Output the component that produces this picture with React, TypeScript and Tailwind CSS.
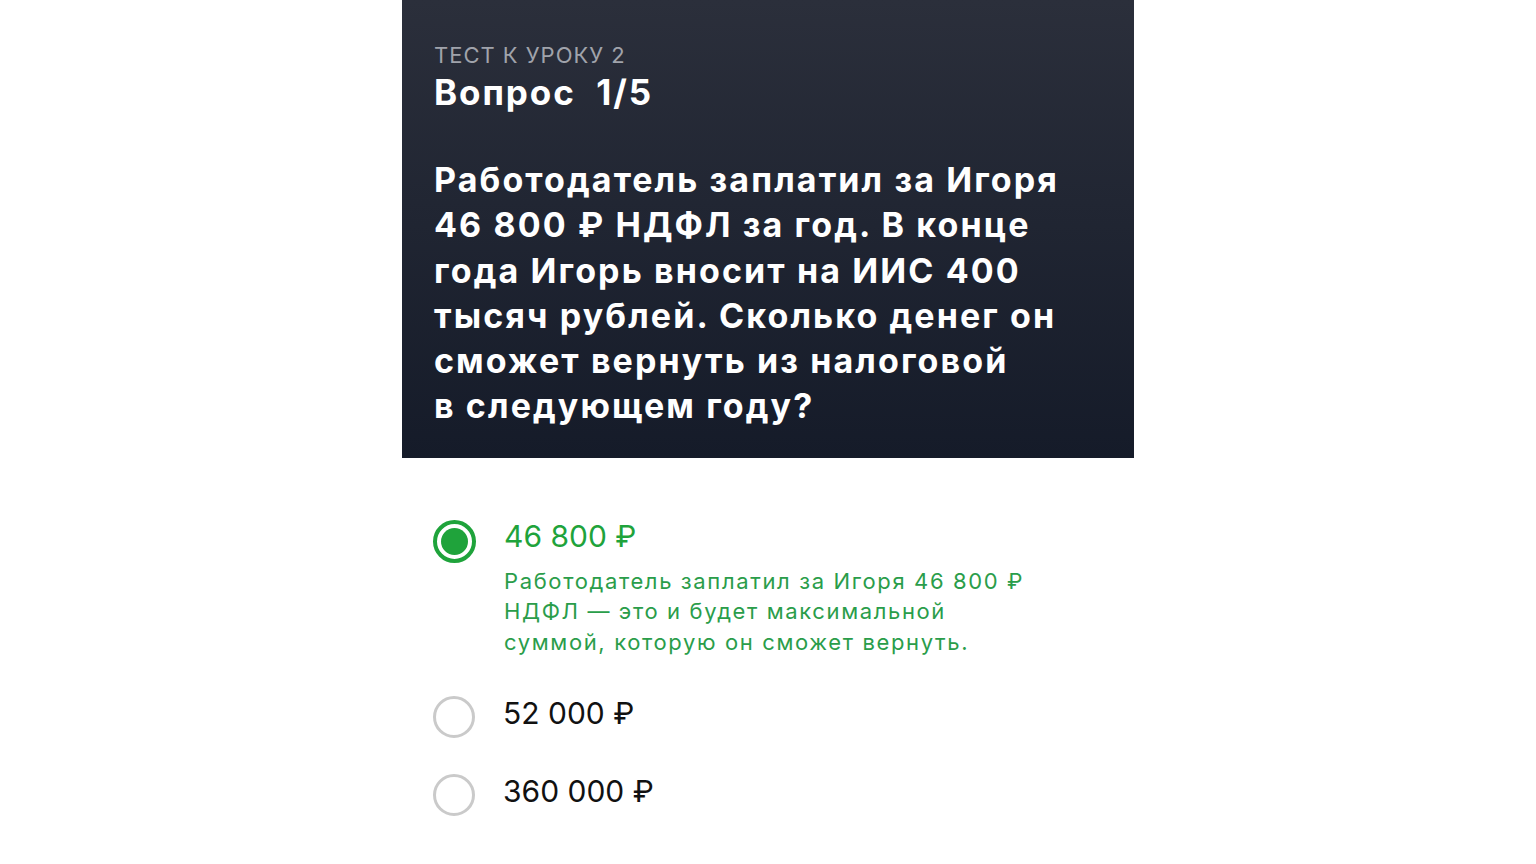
const FONT = { fontFamily: 'Inter, "Noto Sans", sans-serif' };

type Option = { value: string; selected?: boolean; note?: string[] };

const OPTIONS: Option[] = [
  {
    value: '46 800 ₽',
    selected: true,
    note: [
      'Работодатель заплатил за Игоря 46 800 ₽',
      'НДФЛ — это и будет максимальной',
      'суммой, которую он сможет вернуть.',
    ],
  },
  { value: '52 000 ₽' },
  { value: '360 000 ₽' },
];

const QUESTION = [
  'Работодатель заплатил за Игоря',
  '46 800 ₽ НДФЛ за год. В конце',
  'года Игорь вносит на ИИС 400',
  'тысяч рублей. Сколько денег он',
  'сможет вернуть из налоговой',
  'в следующем году?',
];

function Radio({ on }: { on?: boolean }) {
  if (on) {
    return (
      <span className="flex h-[43px] w-[43px] shrink-0 items-center justify-center rounded-full border-[4px] border-[#1fa33b] bg-white">
        <span className="h-[27px] w-[27px] rounded-full bg-[#1fa33b]" />
      </span>
    );
  }
  return <span className="mt-[2px] h-[42px] w-[42px] shrink-0 rounded-full border-[3px] border-[#cacaca] bg-white" />;
}

export default function App() {
  return (
    <div className="min-h-screen w-full bg-white" style={FONT}>
      <div className="mx-auto w-[732px]">
        <header className="bg-gradient-to-b from-[#2b2f3b] to-[#151b29] px-[32px] pt-[41px] pb-[29px]">
          <p className="text-[22px] leading-[28px] tracking-[0.045em] text-[#a0a3ab]">ТЕСТ К УРОКУ 2</p>
          <h1 className="mt-[1px] text-[35px] font-bold leading-[44px] tracking-[0.055em] text-white">
            Вопрос&nbsp; 1/5
          </h1>
          <p className="mt-[43px] text-[34px] font-bold leading-[45.3px] tracking-[0.062em] text-white">
            {QUESTION.map((l, i) => (
              <span key={i} className="block whitespace-nowrap">
                {l}
              </span>
            ))}
          </p>
        </header>

        <ul className="flex flex-col px-[31px] pt-[62px]">
          {OPTIONS.map((o, i) => (
            <li
              key={o.value}
              className={
                o.selected
                  ? 'mb-[37px] flex items-start gap-[28px]'
                  : i === 1
                    ? 'mb-[34px] flex items-start gap-[28px]'
                    : 'flex items-start gap-[28px]'
              }
            >
              <Radio on={o.selected} />
              <div>
                <p
                  className={
                    o.selected
                      ? 'text-[30px] leading-[32px] text-[#1fa33b]'
                      : 'text-[30px] leading-[38px] text-[#111111]'
                  }
                >
                  {o.value}
                </p>
                {o.note ? (
                  <p className="mt-[14px] text-[22px] leading-[30.5px] tracking-[0.074em] text-[#2a9d4a]">
                    {o.note.map((l, j) => (
                      <span key={j} className="block whitespace-nowrap">
                        {l}
                      </span>
                    ))}
                  </p>
                ) : null}
              </div>
            </li>
          ))}
        </ul>
      </div>
    </div>
  );
}
